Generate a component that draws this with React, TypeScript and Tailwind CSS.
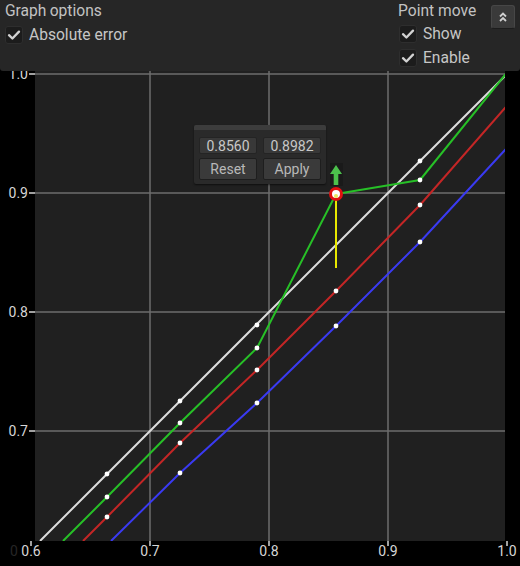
import React from "react";

const FONT = { fontFamily: "Roboto, 'Noto Sans', 'Liberation Sans', sans-serif" };

type P = [number, number];
const pts = (a: P[]) => a.map((p) => p.join(",")).join(" ");

const white: P[] = [[40, 541], [107, 474], [180, 401], [257, 324], [336, 245], [420, 161], [505, 76], [520, 61]];
const green: P[] = [[63, 541], [107, 497], [180, 423], [257, 348], [336, 194], [420, 180], [505, 75], [520, 57]];
const red: P[] = [[83, 541], [107, 517], [180, 443], [257, 370], [336, 291], [420, 205], [505, 108], [520, 91]];
const blue: P[] = [[111, 541], [180, 473], [257, 403], [336, 326], [420, 242], [505, 150], [520, 134]];

const dots: P[] = [
  [107, 474], [180, 401], [257, 325], [420, 161],
  [107, 497], [180, 423], [257, 348], [420, 180],
  [107, 517], [180, 443], [257, 370], [336, 291], [420, 205],
  [180, 473], [257, 403], [336, 326], [420, 242],
];

function Check() {
  return (
    <div className="w-[18px] h-[18px] rounded-[3px] bg-[#1c1c1c] border border-[#2e2e2e] flex items-center justify-center">
      <svg width="14" height="14" viewBox="0 0 14 14">
        <path d="M2 7.2 L5.4 10.5 L12 3.6" fill="none" stroke="#d2d2d2" strokeWidth="2.3" strokeLinecap="round" strokeLinejoin="round" />
      </svg>
    </div>
  );
}

function CheckRow({ label }: { label: string }) {
  return (
    <div className="flex items-center gap-[6px] h-[18px]">
      <Check />
      <span className="text-[15.6px] leading-[18px] text-[#c6c6c6] whitespace-nowrap">{label}</span>
    </div>
  );
}

export default function App() {
  const yTicks: [number, string][] = [[74, "1.0"], [193, "0.9"], [312, "0.8"], [431, "0.7"]];
  const xTicks: [number, string][] = [[31, "0.6"], [150, "0.7"], [269, "0.8"], [388, "0.9"], [507, "1.0"]];
  return (
    <div className="relative w-[520px] h-[566px] bg-black overflow-hidden" style={FONT}>
      <svg width="520" height="566" className="block">
        <defs>
          <clipPath id="plot">
            <rect x="35" y="0" width="470" height="541" />
          </clipPath>
        </defs>
        <rect x="35" y="0" width="470" height="541" fill="#202020" />
        {[150, 269, 388].map((x) => (
          <line key={x} x1={x} y1="0" x2={x} y2="541" stroke="#6c6c6c" strokeWidth="1.5" />
        ))}
        {[74, 193, 312, 431].map((y) => (
          <line key={y} x1="35" y1={y} x2="505" y2={y} stroke="#6c6c6c" strokeWidth="1.5" />
        ))}
        {yTicks.map(([y, t]) => (
          <g key={t}>
            <line x1="29" y1={y} x2="35" y2={y} stroke="#d6d6d6" strokeWidth="1.5" />
            <text x="28" y={y + 5} textAnchor="end" fontSize="14" fill="#d6d6d6">{t}</text>
          </g>
        ))}
        <text x="10" y="556" fontSize="14" fill="#262626">0</text>
        {xTicks.map(([x, t]) => (
          <g key={t}>
            <line x1={x} y1="541" x2={x} y2="546" stroke="#d6d6d6" strokeWidth="1.5" />
            <text x={x} y="556" textAnchor="middle" fontSize="14" fill="#d6d6d6">{t}</text>
          </g>
        ))}
        <g clipPath="url(#plot)" fill="none" strokeWidth="2" strokeLinejoin="round">
          <polyline points={pts(blue)} stroke="#3a3af2" />
          <polyline points={pts(red)} stroke="#c42626" />
          <polyline points={pts(white)} stroke="#dcdcdc" />
          <polyline points={pts(green)} stroke="#27c027" />
        </g>
        {dots.map(([x, y], i) => (
          <circle key={i} cx={x} cy={y} r="2.4" fill="#ffffff" />
        ))}
        <line x1="336" y1="194" x2="336" y2="268" stroke="#e8e800" strokeWidth="2" />
        <rect x="330" y="163" width="13" height="23" fill="#1a1a1a" />
        <path d="M336 165 L342 174 L338.3 174 L338.3 185 L333.7 185 L333.7 174 L330 174 Z" fill="#4cc04c" />
        <circle cx="336" cy="194" r="5.5" fill="#ffffff" stroke="#e01010" strokeWidth="3" />
        <circle cx="336" cy="196" r="2" fill="#e8e860" />
      </svg>

      {/* Top options panel */}
      <div className="absolute top-0 left-0 w-[520px] h-[71px] bg-[#262626] rounded-b-[3px] flex">
        <div className="flex-1 flex flex-col pl-[5px] pt-[2px] gap-[5px]">
          <div className="relative text-[15.6px] leading-[18px] text-[#c2c2c2] whitespace-nowrap">
            <span>Graph</span>
            <span className="text-[#3a3a3a] text-[13px] ml-[4px] mr-[-12px]">E</span>
            <span className="relative"> options</span>
          </div>
          <CheckRow label="Absolute error" />
        </div>
        <div className="w-[82px] flex flex-col pt-[2px] gap-[5px]">
          <div className="text-[15.6px] leading-[18px] text-[#c2c2c2] whitespace-nowrap">Point move</div>
          <div className="flex flex-col gap-[6px] pl-px">
            <CheckRow label="Show" />
            <CheckRow label="Enable" />
          </div>
        </div>
        <div className="ml-[11px] mr-[5px] mt-[5px] w-[24px] h-[24px] rounded-[3px] bg-[#3a3a3a] border border-[#474747] border-b-[#1c1c1c] flex items-center justify-center">
          <svg width="10" height="12" viewBox="0 0 10 12">
            <path d="M2 5.5 L5 2.5 L8 5.5 M2 10 L5 7 L8 10" fill="none" stroke="#d0d0d0" strokeWidth="1.8" />
          </svg>
        </div>
      </div>

      {/* Point edit popup */}
      <div className="absolute left-[194px] top-[125px] w-[132px] h-[59px] bg-[#2a2a2a] rounded-[2px] flex flex-col shadow-[0_1px_2px_rgba(0,0,0,0.6)]">
        <div className="h-[5px] bg-[#3c3c3c] rounded-t-[2px]" />
        <div className="flex flex-col gap-[4px] px-[5px] pt-[7px]">
          <div className="flex gap-[6px]">
            <div className="w-[58px] h-[17px] bg-[#383838] border border-[#242424] rounded-[2px] flex items-center justify-center text-[14px] leading-none text-[#c8c8c8]">0.8560</div>
            <div className="w-[58px] h-[17px] bg-[#383838] border border-[#242424] rounded-[2px] flex items-center justify-center text-[14px] leading-none text-[#c8c8c8]">0.8982</div>
          </div>
          <div className="flex gap-[6px]">
            <div className="w-[58px] h-[22px] bg-[#3a3a3a] border border-[#1e1e1e] rounded-[2px] flex items-center justify-center text-[14px] leading-none text-[#b8b8b8]">Reset</div>
            <div className="w-[58px] h-[22px] bg-[#3a3a3a] border border-[#1e1e1e] rounded-[2px] flex items-center justify-center text-[14px] leading-none text-[#b8b8b8]">Apply</div>
          </div>
        </div>
      </div>
    </div>
  );
}
